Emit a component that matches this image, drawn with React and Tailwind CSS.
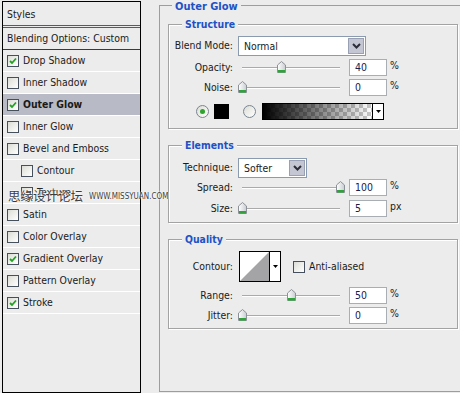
import React from "react";

const styleList = [
  { name: "Drop Shadow", checked: true },
  { name: "Inner Shadow" },
  { name: "Outer Glow", checked: true, active: true },
  { name: "Inner Glow" },
  { name: "Bevel and Emboss" },
  { name: "Contour", indent: true },
  { name: "Texture", indent: true },
  { name: "Satin" },
  { name: "Color Overlay" },
  { name: "Gradient Overlay", checked: true },
  { name: "Pattern Overlay" },
  { name: "Stroke", checked: true },
];

const CheckBox = ({ checked }) => (
  <span className="w-[12px] h-[12px] shrink-0 border border-[#46505c] bg-gradient-to-br from-[#dcdcd6] to-white flex items-center justify-center">
    {checked && (
      <svg width="8" height="8" viewBox="0 0 8 8">
        <path d="M1 4 L3 6 L7 1.5" stroke="#21a121" strokeWidth="1.8" fill="none" />
      </svg>
    )}
  </span>
);

const Radio = ({ on }) => (
  <span className="w-[13px] h-[13px] shrink-0 rounded-full border border-[#7a8591] bg-gradient-to-br from-[#dcdcd6] to-white flex items-center justify-center">
    {on && <span className="w-[5px] h-[5px] rounded-full bg-[#2ea32e]" />}
  </span>
);

const Chevron = () => (
  <svg width="9" height="6" viewBox="0 0 9 6">
    <path d="M1 1 L4.5 4.5 L8 1" stroke="#2d2d3a" strokeWidth="2" fill="none" />
  </svg>
);

const Select = ({ value, width }) => (
  <div className={`flex h-[20px] border border-[#8a9bb0] bg-white ${width}`}>
    <span className="flex-1 pl-[5px] leading-[18px]">{value}</span>
    <span className="w-[16px] m-[1px] border border-[#9aa0b4] bg-[#c4c6d3] flex items-center justify-center">
      <Chevron />
    </span>
  </div>
);

const Thumb = () => (
  <svg width="9" height="12" viewBox="0 0 9 12">
    <defs>
      <linearGradient id="tg" x1="0" y1="0" x2="1" y2="0">
        <stop offset="0" stopColor="#ffffff" />
        <stop offset="1" stopColor="#c9cdd2" />
      </linearGradient>
    </defs>
    <path d="M0.5 4 L4.5 0.5 L8.5 4 L8.5 11.5 L0.5 11.5 Z" fill="url(#tg)" stroke="#8b9197" />
    <rect x="1" y="9" width="7" height="2.5" fill="#2fa33a" />
  </svg>
);

const Slider = ({ pct }) => (
  <div className="relative w-[111px] h-[17px] shrink-0">
    <div className="absolute left-[4px] top-[8px] w-[98px] h-[2px] border-t border-[#aaaaaa] bg-white" />
    <div className="absolute top-[2px]" style={{ left: 4 + pct * 0.98 - 4 }}>
      <Thumb />
    </div>
  </div>
);

const NumBox = ({ value, unit }) => (
  <div className="flex items-start">
    <div className="w-[38px] h-[17px] border border-[#a9aeb5] bg-white pl-[5px] leading-[15px] text-[#16204a]">
      {value}
    </div>
    <span className="ml-[3px] -mt-[1px] leading-[14px]">{unit}</span>
  </div>
);

const Label = ({ children }) => (
  <span className="w-[64px] shrink-0 text-right">{children}</span>
);

const SliderRow = ({ label, pct, value, unit, className }) => (
  <div className={`flex items-center h-[17px] ${className}`}>
    <Label>{label}</Label>
    <span className="w-[5px] shrink-0" />
    <Slider pct={pct} />
    <NumBox value={value} unit={unit} />
  </div>
);

const Group = ({ title, className, children }) => (
  <div className={`ml-[8px] w-[290px] border border-[#a3a3a3] shadow-[inset_1px_1px_0_#fff,1px_1px_0_#fff] ${className}`}>
    <div className="-mt-[8px] ml-[13px] w-fit px-[3px] bg-[#ececec] font-bold text-[#2151c6] leading-[14px]">
      {title}
    </div>
    {children}
  </div>
);

const GradientSwatch = () => (
  <div className="flex w-[122px] h-[17px] border border-black bg-white">
    <svg width="109" height="15" className="shrink-0">
      <defs>
        <pattern id="chk" width="8" height="8" patternUnits="userSpaceOnUse">
          <rect width="8" height="8" fill="#ffffff" />
          <rect width="4" height="4" fill="#c8c8c8" />
          <rect x="4" y="4" width="4" height="4" fill="#c8c8c8" />
        </pattern>
        <linearGradient id="gb" x1="0" y1="0" x2="1" y2="0">
          <stop offset="0" stopColor="#000" stopOpacity="1" />
          <stop offset="1" stopColor="#000" stopOpacity="0" />
        </linearGradient>
      </defs>
      <rect width="109" height="15" fill="url(#chk)" />
      <rect width="109" height="15" fill="url(#gb)" />
    </svg>
    <span className="flex-1 border-l border-black flex items-center justify-center">
      <svg width="5" height="3"><path d="M0 0 H5 L2.5 3 Z" fill="#000" /></svg>
    </span>
  </div>
);

const ContourPicker = () => (
  <div className="flex w-[42px] h-[31px] border border-black bg-white">
    <svg width="29" height="29" className="shrink-0">
      <rect width="29" height="29" fill="#fff" />
      <path d="M0 29 L29 0 L29 29 Z" fill="#a4a4a6" />
    </svg>
    <span className="flex-1 border-l border-black flex items-center justify-center">
      <svg width="5" height="3"><path d="M0 0 H5 L2.5 3 Z" fill="#000" /></svg>
    </span>
  </div>
);

export default function App() {
  return (
    <div className="relative flex w-[460px] h-[393px] overflow-hidden bg-[#ececec] text-[10.4px] text-[#1a1a1a] font-['DejaVu_Sans_Condensed','DejaVu_Sans',sans-serif] [font-stretch:condensed]">
      {/* Styles list */}
      <div className="mt-[1px] ml-[2px] w-[139px] h-[392px] shrink-0 border border-black flex flex-col">
        <div className="h-[26px] pl-[4px] leading-[25px] border-b-[3px] border-double border-[#5b5b5b]">Styles</div>
        <div className="h-[22px] pl-[4px] leading-[21px] border-b border-[#3a3a3a]">Blending Options: Custom</div>
        {styleList.map((s) => (
          <div
            key={s.name}
            className={`h-[22px] flex items-center gap-[4px] border-b border-white ${
              s.indent ? "pl-[18px]" : "pl-[4px]"
            } ${s.active ? "bg-[#b8bac6] font-bold" : ""}`}
          >
            <CheckBox checked={s.checked} />
            <span>{s.name}</span>
          </div>
        ))}
      </div>

      {/* Outer Glow panel */}
      <div className="ml-[18px] mt-[5px] w-[320px] h-[387px] shrink-0 border border-[#9d9d9d]">
        <div className="-mt-[6px] ml-[12px] w-fit px-[3px] bg-[#ececec] font-bold text-[11px] text-[#2151c6] leading-[14px]">
          Outer Glow
        </div>

        <Group title="Structure" className="mt-[10px] pb-[8px]">
          <div className="flex items-center mt-[5px] h-[20px]">
            <Label>Blend Mode:</Label>
            <span className="w-[5px] shrink-0" />
            <Select value="Normal" width="w-[128px]" />
          </div>
          <SliderRow label="Opacity:" pct={40} value="40" unit="%" className="mt-[3px]" />
          <SliderRow label="Noise:" pct={0} value="0" unit="%" className="mt-[3px]" />
          <div className="flex items-center mt-[7px] h-[17px] pl-[27px]">
            <Radio on />
            <span className="ml-[5px] w-[15px] h-[15px] bg-black" />
            <span className="ml-[14px]"><Radio /></span>
            <span className="ml-[6px]"><GradientSwatch /></span>
          </div>
        </Group>

        <Group title="Elements" className="mt-[16px] pb-[5px]">
          <div className="flex items-center mt-[5px] h-[21px]">
            <Label>Technique:</Label>
            <span className="w-[5px] shrink-0" />
            <Select value="Softer" width="w-[69px]" />
          </div>
          <SliderRow label="Spread:" pct={100} value="100" unit="%" className="mt-[1px]" />
          <SliderRow label="Size:" pct={0} value="5" unit="px" className="mt-[4px]" />
        </Group>

        <Group title="Quality" className="mt-[16px] pb-[4px]">
          <div className="flex items-center mt-[5px] h-[31px]">
            <Label>Contour:</Label>
            <span className="w-[6px] shrink-0" />
            <ContourPicker />
            <span className="ml-[12px]"><CheckBox /></span>
            <span className="ml-[4px]">Anti-aliased</span>
          </div>
          <SliderRow label="Range:" pct={50} value="50" unit="%" className="mt-[5px]" />
          <SliderRow label="Jitter:" pct={0} value="0" unit="%" className="mt-[3px]" />
        </Group>
      </div>

      {/* watermark */}
      <div className="absolute left-[8px] top-[188px] flex items-end gap-[6px] text-[#3c3c3c] [text-shadow:0_0_2px_#fff,0_0_2px_#fff] pointer-events-none">
        <span className="text-[12.5px] leading-[15px] font-['Noto_Sans_CJK_SC',sans-serif]">思缘设计论坛</span>
        <span className="text-[8px] leading-[12px] font-['DejaVu_Sans',sans-serif]">WWW.MISSYUAN.COM</span>
      </div>
    </div>
  );
}
